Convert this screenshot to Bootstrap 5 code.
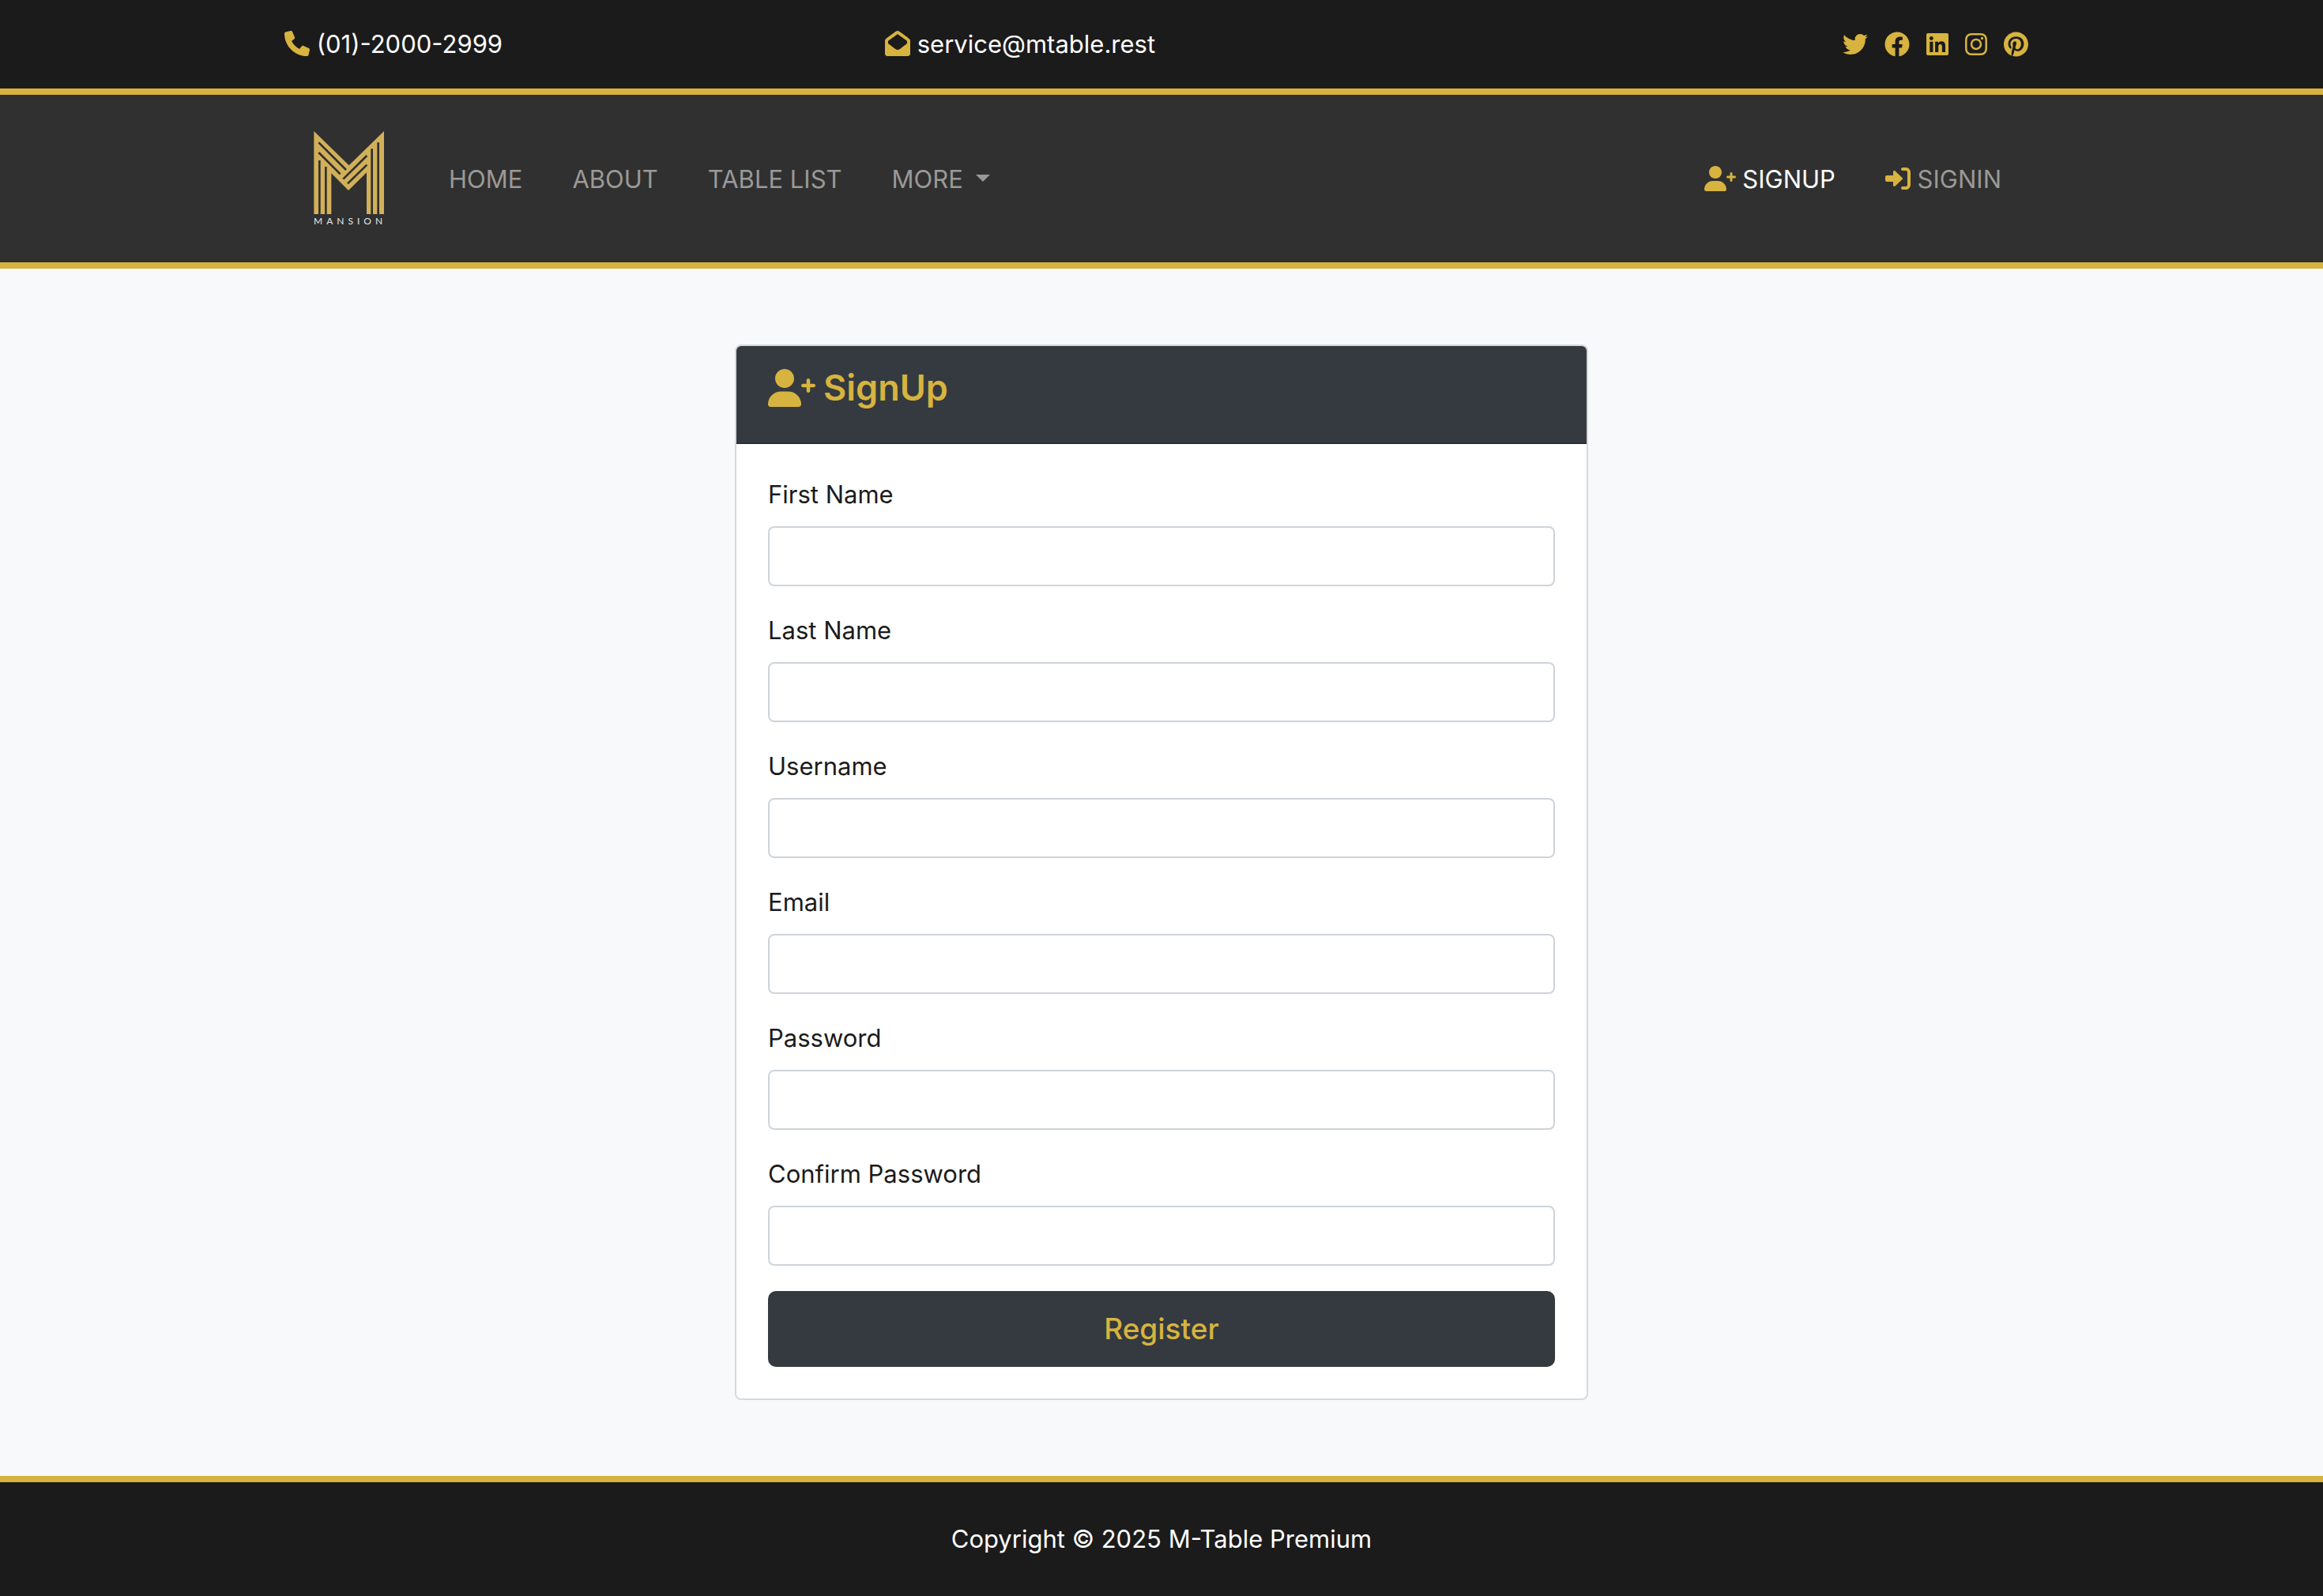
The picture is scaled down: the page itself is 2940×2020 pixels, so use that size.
<!DOCTYPE html>
<html lang="en">
<head>
<meta charset="utf-8">
<meta name="viewport" content="width=device-width, initial-scale=1">
<title>M-Table | SignUp</title>
<link href="https://cdn.jsdelivr.net/npm/bootstrap@5.3.0/dist/css/bootstrap.min.css" rel="stylesheet">
<style>
  :root { font-size: 32px; --gold: #d7b33f; --slate: #343a40; --ink: #1b1b1b; --bs-border-width: 2px; }
  body { font-family: Inter, "Liberation Sans", sans-serif; font-size: 31px; line-height: 48px; color: #1b1b1b; background: #f8f9fb; }
  .page-wrap { max-width: 2280px; padding-left: 30px; padding-right: 30px; }
  .page-wrap > .row { --bs-gutter-x: 60px; }
  .fa-glyph { height: 32px; width: auto; fill: var(--gold); vertical-align: -4px; }
  .topbar { background: var(--ink); border-bottom: 8px solid var(--gold); }
  .social-links { gap: 21px; padding-right: 13px; }
  .social-links .fa-glyph { display: block; }
  .site-nav { background: #303030; border-bottom: 8px solid var(--gold); padding: 0; min-height: 220px; }
  .site-nav .page-wrap { padding-left: 66px; padding-right: 61px; }
  .site-nav .navbar-nav { gap: 31px; }
  .site-nav .nav-link { font-size: 31px; padding: 18px 16px 16px; color: #9b9997; }
  .site-nav .nav-link.active { color: #fff; }
  .site-nav .dropdown-toggle::after { margin-left: 16px; vertical-align: 8px; border-top-width: 9px; border-right-width: 9px; border-left-width: 9px; }
  .brand-logo { width: 91px; margin-right: 65px; padding: 0; line-height: 16px; }
  .brand-logo svg { display: block; width: 91px; height: 107px; }
  .brand-word { font: 12px/16px Lato, sans-serif; letter-spacing: 5px; color: #e8e8e8; padding-left: 1px; }
  .signup-card { --bs-card-border-radius: 8px; --bs-card-inner-border-radius: 6px; --bs-card-border-color: #d5d9dd; }
  .signup-card .card-header { background: var(--slate); color: var(--gold); padding: 24px 40px; border-bottom: 2px solid #2c2f35; }
  .signup-card h4 { display: flex; align-items: center; gap: 10px; font-size: 45px; line-height: 58px; font-weight: 600; margin-bottom: 16px; }
  .signup-card h4 .fa-glyph { height: 48px; }
  .signup-card .card-body { padding: 40px; }
  .signup-card .form-label { display: block; margin-bottom: 16px; }
  .signup-card .form-control { height: 76px; border-color: #ced4da; border-radius: 8px; font-size: 31px; }
  .btn-register { background: var(--slate); color: var(--gold); font-size: 37px; font-weight: 500; line-height: 60px; padding: 18px 32px; border: 0; border-radius: 10px; }
  .btn-register:hover { background: #23272b; color: var(--gold); }
  .site-footer { background: var(--ink); border-top: 8px solid var(--gold); }
</style>
<script src="https://cdn.jsdelivr.net/npm/bootstrap@5.3.0/dist/js/bootstrap.bundle.min.js"></script>
</head>
<body>
<svg class="d-none" aria-hidden="true">
  <symbol id="user-plus" viewBox="0 0 640 512"><path d="M274.7 304H173.3C77.61 304 0 381.6 0 477.3c0 19.14 15.52 34.67 34.66 34.67h378.7C432.5 512 448 496.5 448 477.3C448 381.6 370.4 304 274.7 304zM224 256c70.7 0 128-57.31 128-128S294.7 0 224 0C153.3 0 96 57.31 96 128S153.3 256 224 256zM616 200h-48v-48C568 138.8 557.3 128 544 128s-24 10.8-24 24v48h-48C458.8 200 448 210.8 448 224s10.75 24 24 24h48v48C520 309.3 530.8 320 544 320s24-10.75 24-24v-48h48C629.3 248 640 237.3 640 224S629.3 200 616 200z"/></symbol>
</svg>

<header class="topbar py-3">
  <div class="container page-wrap">
    <div class="row align-items-center">
      <div class="col-4"><svg class="fa-glyph" viewBox="0 0 512 512"><path d="M511.2 387l-23.25 100.8c-3.266 14.25-15.79 24.22-30.46 24.22C205.2 512 0 306.8 0 54.5c0-14.66 9.969-27.2 24.22-30.45l100.8-23.25C139.7-2.602 154.7 5.018 160.8 18.92l46.52 108.5c5.438 12.78 1.77 27.67-8.98 36.45L144.5 207.1c33.98 69.22 90.26 125.5 159.5 159.5l44.08-53.8c8.688-10.78 23.69-14.51 36.47-8.975l108.5 46.51C506.1 357.2 514.6 372.4 511.2 387z"/></svg> <span class="text-white">(01)-2000-2999</span></div>
      <div class="col-4"><svg class="fa-glyph" viewBox="0 0 512 512"><path d="M493.6 163c-24.88-19.62-45.5-35.37-164.3-121.6C312.7 29.21 279.7 0 256.4 0H255.6C232.3 0 199.3 29.21 182.6 41.38c-118.8 86.25-139.4 101.1-164.3 121.6C6.75 172 0 186 0 200.8v263.2C0 490.5 21.49 512 48 512h416c26.51 0 48-21.49 48-47.1V200.8C512 186 505.3 172 493.6 163zM303.2 367.5C289.1 378.5 272.5 384 256 384s-33.06-5.484-47.16-16.47L64 254.9V208.5c21.16-16.59 46.48-35.66 156.4-115.5c3.18-2.328 6.891-5.187 10.98-8.353C236.9 80.44 247.8 71.97 256 66.84c8.207 5.131 19.14 13.6 24.61 17.84c4.09 3.166 7.801 6.027 11.15 8.478C400.9 172.5 426.6 191.7 448 208.5v46.32L303.2 367.5z"/></svg> <span class="text-white">service@mtable.rest</span></div>
      <div class="col-4">
        <div class="social-links d-flex justify-content-end">
          <a href="#" aria-label="Twitter"><svg class="fa-glyph" viewBox="0 0 512 512"><path d="M459.37 151.716c.325 4.548.325 9.097.325 13.645 0 138.72-105.583 298.558-298.558 298.558-59.452 0-114.68-17.219-161.137-47.106 8.447.974 16.568 1.299 25.34 1.299 49.055 0 94.213-16.568 130.274-44.832-46.132-.975-84.792-31.188-98.112-72.772 6.498.974 12.995 1.624 19.818 1.624 9.421 0 18.843-1.3 27.614-3.573-48.081-9.747-84.143-51.98-84.143-102.985v-1.299c13.969 7.797 30.214 12.67 47.431 13.319-28.264-18.843-46.781-51.005-46.781-87.391 0-19.492 5.197-37.36 14.294-52.954 51.655 63.675 129.3 105.258 216.365 109.807-1.624-7.797-2.599-15.918-2.599-24.04 0-57.828 46.782-104.934 104.934-104.934 30.213 0 57.502 12.67 76.67 33.137 23.715-4.548 46.456-13.32 66.599-25.34-7.798 24.366-24.366 44.833-46.132 57.827 21.117-2.273 41.584-8.122 60.426-16.243-14.292 20.791-32.161 39.308-52.628 54.253z"/></svg></a>
          <a href="#" aria-label="Facebook"><svg class="fa-glyph" viewBox="0 0 512 512"><path d="M504 256C504 119 393 8 256 8S8 119 8 256c0 123.78 90.69 226.38 209.25 245V327.69h-63V256h63v-54.64c0-62.15 37-96.48 93.67-96.48 27.14 0 55.52 4.84 55.52 4.84v61h-31.28c-30.8 0-40.41 19.12-40.41 38.73V256h68.78l-11 71.69h-57.78V501C413.31 482.38 504 379.78 504 256z"/></svg></a>
          <a href="#" aria-label="LinkedIn"><svg class="fa-glyph" viewBox="0 0 448 512"><path d="M416 32H31.9C14.3 32 0 46.5 0 64.3v383.4C0 465.5 14.3 480 31.9 480H416c17.6 0 32-14.5 32-32.3V64.3c0-17.8-14.4-32.3-32-32.3zM135.4 416H69V202.2h66.5V416zm-33.2-243c-21.3 0-38.5-17.3-38.5-38.5S80.9 96 102.2 96c21.2 0 38.5 17.3 38.5 38.5 0 21.3-17.2 38.5-38.5 38.5zm282.1 243h-66.4V312c0-24.8-.5-56.7-34.5-56.7-34.6 0-39.9 27-39.9 54.9V416h-66.4V202.2h63.7v29.2h.9c8.9-16.8 30.6-34.5 62.9-34.5 67.2 0 79.7 44.3 79.7 101.9V416z"/></svg></a>
          <a href="#" aria-label="Instagram"><svg class="fa-glyph" viewBox="0 0 448 512"><path d="M224.1 141c-63.6 0-114.9 51.3-114.9 114.9s51.3 114.9 114.9 114.9S339 319.5 339 255.9 287.7 141 224.1 141zm0 189.6c-41.1 0-74.7-33.5-74.7-74.7s33.5-74.7 74.7-74.7 74.7 33.5 74.7 74.7-33.6 74.7-74.7 74.7zm146.4-194.3c0 14.9-12 26.8-26.8 26.8-14.9 0-26.8-12-26.8-26.8s12-26.8 26.8-26.8 26.8 12 26.8 26.8zm76.1 27.2c-1.7-35.9-9.9-67.7-36.2-93.9-26.2-26.2-58-34.4-93.9-36.2-37-2.1-147.9-2.1-184.9 0-35.8 1.7-67.6 9.9-93.9 36.1s-34.4 58-36.2 93.9c-2.1 37-2.1 147.9 0 184.9 1.7 35.9 9.9 67.7 36.2 93.9s58 34.4 93.9 36.2c37 2.1 147.9 2.1 184.9 0 35.9-1.7 67.7-9.9 93.9-36.2 26.2-26.2 34.4-58 36.2-93.9 2.1-37 2.1-147.8 0-184.8zM398.8 388c-7.8 19.6-22.9 34.7-42.6 42.6-29.5 11.7-99.5 9-132.1 9s-102.7 2.6-132.1-9c-19.6-7.8-34.7-22.9-42.6-42.6-11.7-29.5-9-99.5-9-132.1s-2.6-102.7 9-132.1c7.8-19.6 22.9-34.7 42.6-42.6 29.5-11.7 99.5-9 132.1-9s102.7-2.6 132.1 9c19.6 7.8 34.7 22.9 42.6 42.6 11.7 29.5 9 99.5 9 132.1s2.7 102.7-9 132.1z"/></svg></a>
          <a href="#" aria-label="Pinterest"><svg class="fa-glyph" viewBox="0 0 496 512"><path d="M496 256c0 137-111 248-248 248-25.6 0-50.2-3.9-73.4-11.1 10.1-16.5 25.2-43.5 30.8-65 3-11.6 15.4-59 15.4-59 8.1 15.4 31.7 28.5 56.8 28.5 74.8 0 128.7-68.8 128.7-154.3 0-81.9-66.9-143.2-152.9-143.2-107 0-163.9 71.8-163.9 150.1 0 36.4 19.4 81.7 50.3 96.1 4.7 2.2 7.2 1.2 8.3-3.3.8-3.4 5-20.3 6.9-28.1.6-2.5.3-4.7-1.7-7.1-10.1-12.5-18.3-35.3-18.3-56.6 0-54.7 41.4-107.6 112-107.6 60.9 0 103.6 41.5 103.6 100.9 0 67.1-33.9 113.6-78 113.6-24.3 0-42.6-20.1-36.7-44.8 7-29.5 20.5-61.3 20.5-82.6 0-19-10.2-34.9-31.4-34.9-24.9 0-44.9 25.7-44.9 60.2 0 22 7.4 36.8 7.4 36.8s-24.5 103.8-29 123.2c-5 21.4-3 51.6-.9 71.2C65.4 450.9 0 361.1 0 256 0 119 111 8 248 8s248 111 248 248z"/></svg></a>
        </div>
      </div>
    </div>
  </div>
</header>

<nav class="navbar navbar-expand site-nav">
  <div class="container page-wrap">
    <a class="navbar-brand brand-logo" href="#" aria-label="Mansion">
      <svg viewBox="168 492 273 321"><path fill="#d2b059" d="M172 495L305 625 438 495V810H372V652L303 720 238 655V810H172z"/><path fill="none" stroke="#303030" stroke-width="8" d="M190 538L294 642M190 576L272 658M283 677L373 588M300 694L373 623M193 606V812M217 630V812M392 562V812M416 538V812"/></svg>
      <span class="brand-word d-block">MANSION</span>
    </a>
    <ul class="navbar-nav me-auto">
      <li class="nav-item"><a class="nav-link" href="#">HOME</a></li>
      <li class="nav-item"><a class="nav-link" href="#">ABOUT</a></li>
      <li class="nav-item"><a class="nav-link" href="#">TABLE LIST</a></li>
      <li class="nav-item dropdown"><a class="nav-link dropdown-toggle" href="#" role="button" data-bs-toggle="dropdown">MORE</a></li>
    </ul>
    <ul class="navbar-nav">
      <li class="nav-item"><a class="nav-link active" href="#"><svg class="fa-glyph" viewBox="0 0 640 512"><use href="#user-plus"/></svg> SIGNUP</a></li>
      <li class="nav-item"><a class="nav-link" href="#"><svg class="fa-glyph" viewBox="0 0 512 512"><path d="M344.7 238.5l-144.1-136C193.7 95.97 183.4 94.17 174.6 97.95C165.8 101.8 160.1 110.4 160.1 120V192H32.02C14.33 192 0 206.3 0 224v64c0 17.68 14.33 32 32.02 32h128.1v72c0 9.578 5.707 18.25 14.51 22.05c8.803 3.781 19.03 1.984 26-4.594l144.1-136C354.3 264.4 354.3 247.6 344.7 238.5zM416 32h-64c-17.67 0-32 14.33-32 32s14.33 32 32 32h64c17.67 0 32 14.33 32 32v256c0 17.67-14.33 32-32 32h-64c-17.67 0-32 14.33-32 32s14.33 32 32 32h64c53.02 0 96-42.98 96-96V128C512 74.98 469 32 416 32z"/></svg> SIGNIN</a></li>
    </ul>
  </div>
</nav>

<main class="py-5">
  <div class="container page-wrap">
    <div class="row justify-content-center">
      <div class="col-6">
        <div class="card signup-card">
          <div class="card-header">
            <h4><svg class="fa-glyph" viewBox="0 0 640 512"><use href="#user-plus"/></svg> <span>SignUp</span></h4>
          </div>
          <div class="card-body">
            <form>
              <div class="mb-3"><label class="form-label" for="first_name">First Name</label><input class="form-control" type="text" id="first_name"></div>
              <div class="mb-3"><label class="form-label" for="last_name">Last Name</label><input class="form-control" type="text" id="last_name"></div>
              <div class="mb-3"><label class="form-label" for="username">Username</label><input class="form-control" type="text" id="username"></div>
              <div class="mb-3"><label class="form-label" for="email">Email</label><input class="form-control" type="email" id="email"></div>
              <div class="mb-3"><label class="form-label" for="password">Password</label><input class="form-control" type="password" id="password"></div>
              <div class="mb-3"><label class="form-label" for="password2">Confirm Password</label><input class="form-control" type="password" id="password2"></div>
              <button type="submit" class="btn btn-register d-block w-100">Register</button>
            </form>
          </div>
        </div>
      </div>
    </div>
  </div>
</main>

<footer class="site-footer text-white text-center py-4">
  <p class="mb-0">Copyright © 2025 M-Table Premium</p>
</footer>
</body>
</html>
